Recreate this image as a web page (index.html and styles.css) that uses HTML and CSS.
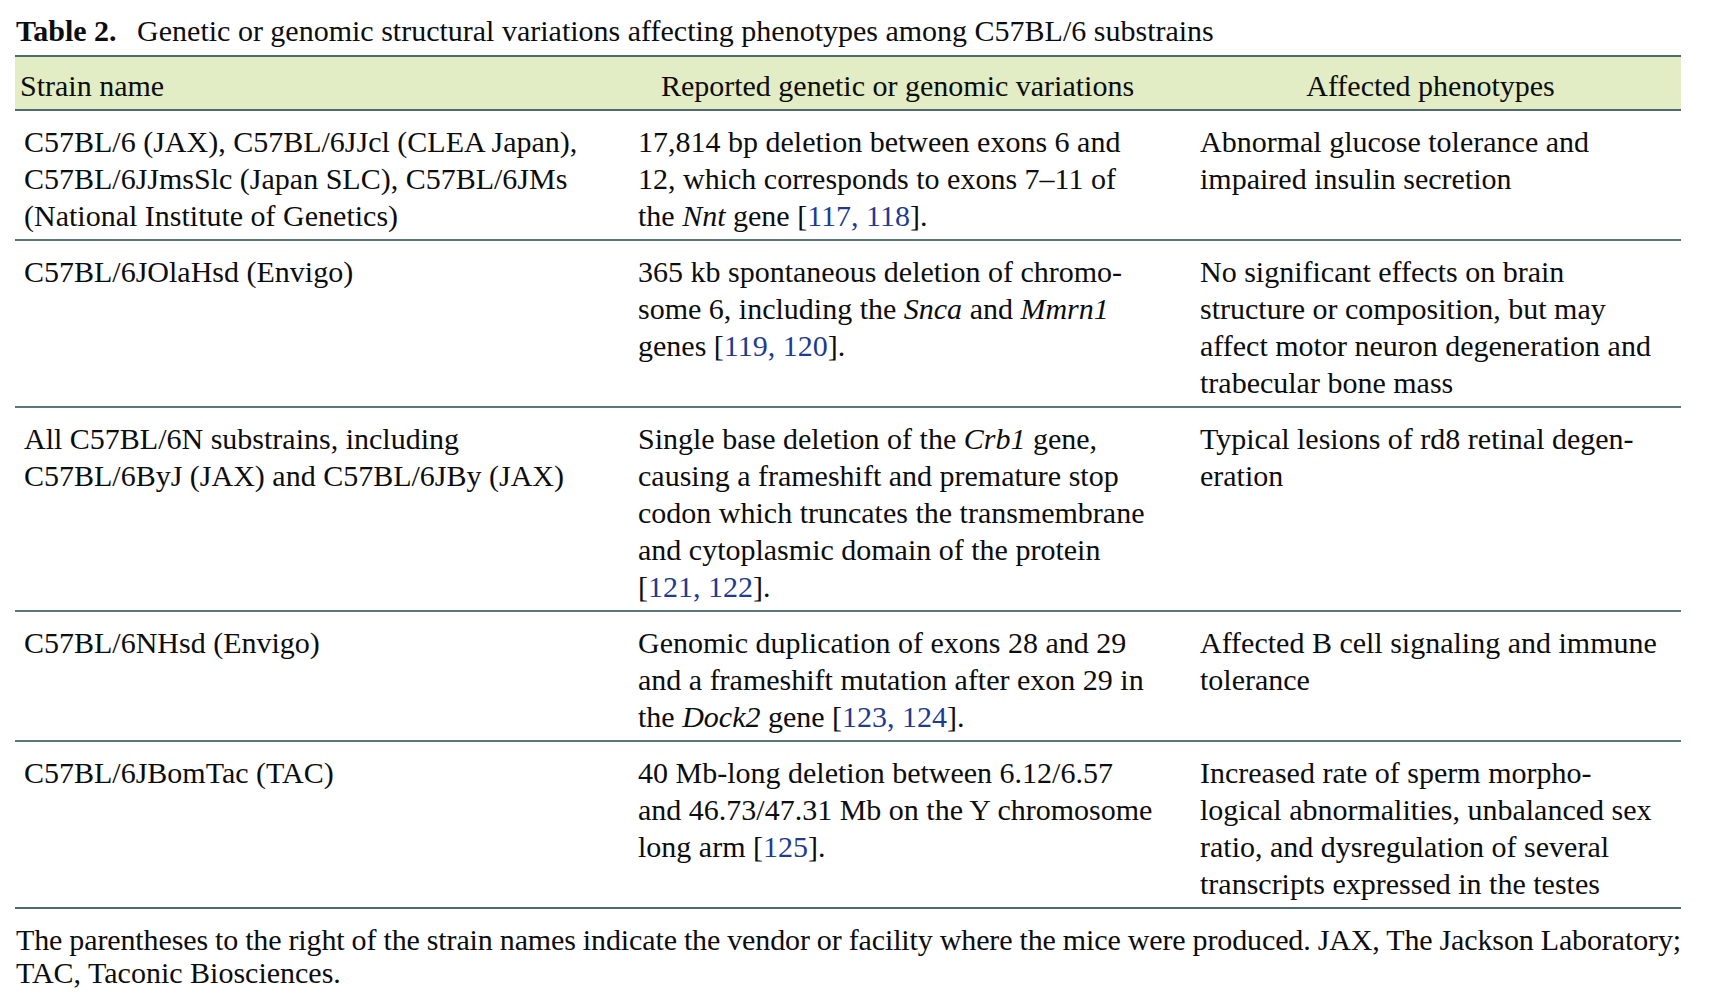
FILE: index.html
```html
<!DOCTYPE html>
<html lang="en">
<head>
<meta charset="utf-8">
<title>Table 2</title>
<link rel="stylesheet" href="styles.css">
</head>
<body>
<div class="page">
  <div class="caption"><span class="label">Table 2.</span> Genetic or genomic structural variations affecting phenotypes among C57BL/6 substrains</div>
  <table class="data">
    <colgroup>
      <col class="c1">
      <col class="c2">
      <col class="c3">
    </colgroup>
    <thead>
      <tr>
        <th class="h1">Strain name</th>
        <th class="hc">Reported genetic or genomic variations</th>
        <th class="hc">Affected phenotypes</th>
      </tr>
    </thead>
    <tbody>
      <tr>
        <td class="d1">C57BL/6 (JAX), C57BL/6JJcl (CLEA Japan),<br>C57BL/6JJmsSlc (Japan SLC), C57BL/6JMs<br>(National Institute of Genetics)</td>
        <td class="d2">17,814 bp deletion between exons 6 and<br>12, which corresponds to exons 7–11 of<br>the <i>Nnt</i> gene [<a class="ref">117, 118</a>].</td>
        <td class="d3">Abnormal glucose tolerance and<br>impaired insulin secretion</td>
      </tr>
      <tr>
        <td class="d1">C57BL/6JOlaHsd (Envigo)</td>
        <td class="d2">365 kb spontaneous deletion of chromo-<br>some 6, including the <i>Snca</i> and <i>Mmrn1</i><br>genes [<a class="ref">119, 120</a>].</td>
        <td class="d3">No significant effects on brain<br>structure or composition, but may<br>affect motor neuron degeneration and<br>trabecular bone mass</td>
      </tr>
      <tr>
        <td class="d1">All C57BL/6N substrains, including<br>C57BL/6ByJ (JAX) and C57BL/6JBy (JAX)</td>
        <td class="d2">Single base deletion of the <i>Crb1</i> gene,<br>causing a frameshift and premature stop<br>codon which truncates the transmembrane<br>and cytoplasmic domain of the protein<br>[<a class="ref">121, 122</a>].</td>
        <td class="d3">Typical lesions of rd8 retinal degen-<br>eration</td>
      </tr>
      <tr>
        <td class="d1">C57BL/6NHsd (Envigo)</td>
        <td class="d2">Genomic duplication of exons 28 and 29<br>and a frameshift mutation after exon 29 in<br>the <i>Dock2</i> gene [<a class="ref">123, 124</a>].</td>
        <td class="d3">Affected B cell signaling and immune<br>tolerance</td>
      </tr>
      <tr>
        <td class="d1">C57BL/6JBomTac (TAC)</td>
        <td class="d2">40 Mb-long deletion between 6.12/6.57<br>and 46.73/47.31 Mb on the Y chromosome<br>long arm [<a class="ref">125</a>].</td>
        <td class="d3">Increased rate of sperm morpho-<br>logical abnormalities, unbalanced sex<br>ratio, and dysregulation of several<br>transcripts expressed in the testes</td>
      </tr>
    </tbody>
  </table>
  <div class="note">
    <div class="note-line first">The parentheses to the right of the strain names indicate the vendor or facility where the mice were produced. JAX, The Jackson Laboratory;</div>
    <div class="note-line">TAC, Taconic Biosciences.</div>
  </div>
</div>
</body>
</html>
```

FILE: styles.css
```css
html, body {
  margin: 0;
  padding: 0;
  background: #ffffff;
}

body {
  font-family: "Liberation Serif", "Times New Roman", Times, serif;
  font-size: 30px;
  color: #0d0d0d;
}

.page {
  width: 1666px;
  padding: 12px 0 0 15px;
}

.caption {
  line-height: 37px;
  margin: 0 0 6px 1px;
  white-space: nowrap;
}

.caption .label {
  font-weight: bold;
  margin-right: 13px;
}

.data {
  width: 1666px;
  border-collapse: collapse;
  table-layout: fixed;
}

.c1 { width: 600px; }
.c2 { width: 565px; }
.c3 { width: 501px; }

.data th {
  font-weight: normal;
  line-height: 37px;
  padding: 10px 0 5px;
  background: #e2ecc5;
  border-top: 2px solid #4f6b6f;
  border-bottom: 2px solid #4f6b6f;
  white-space: nowrap;
}

.data .h1 {
  text-align: left;
  padding-left: 5px;
}

.data .hc {
  text-align: center;
}

.data td {
  vertical-align: top;
  line-height: 37px;
  padding: 12px 0 5px;
  border-bottom: 2px solid #5b777b;
  white-space: nowrap;
  text-align: left;
}

.data tbody tr:last-child td {
  border-bottom-color: #4f6b6f;
}

.data .d1 { padding-left: 9px; }
.data .d2 { padding-left: 23px; }
.data .d3 { padding-left: 20px; }

.ref {
  color: #1f3b8f;
  text-decoration: none;
}

.note {
  margin: 14px 0 0 1px;
  width: 1665px;
  line-height: 33px;
}

.note-line.first {
  text-align: justify;
  text-align-last: justify;
  letter-spacing: -0.12px;
  word-spacing: -2px;
}
```
